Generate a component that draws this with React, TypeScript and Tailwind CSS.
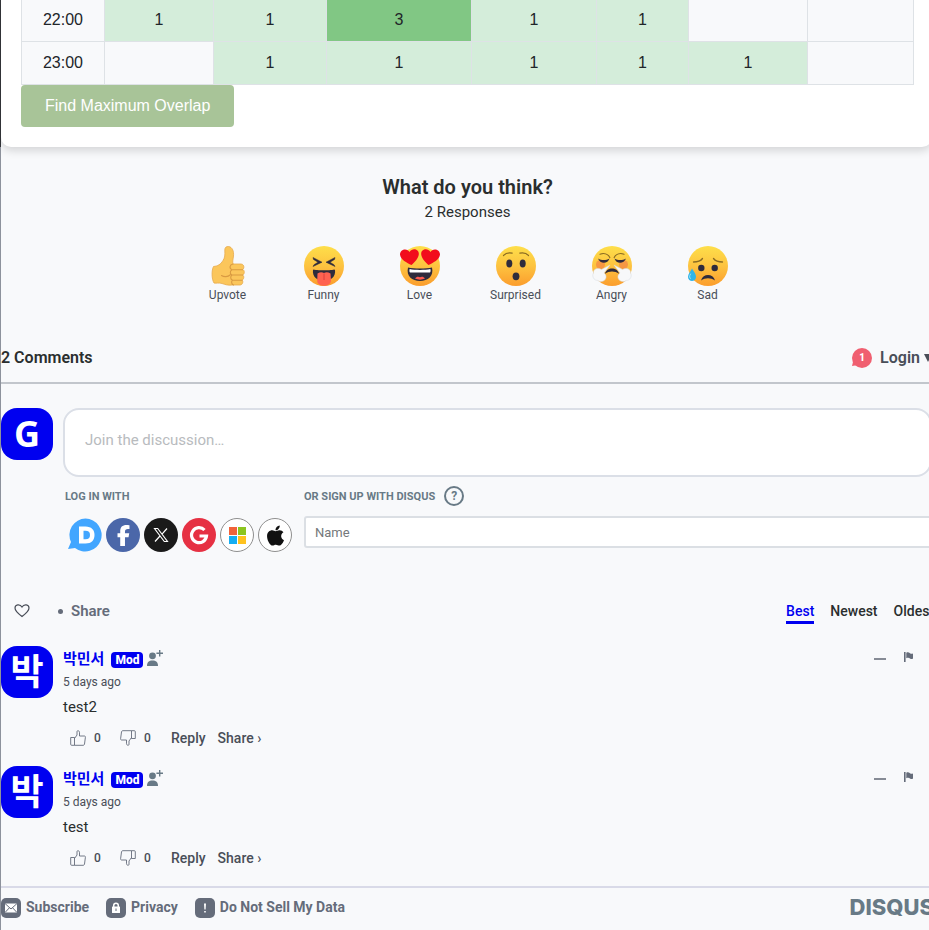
import type { ReactNode } from "react";
import { FaApple, FaFacebookF } from "react-icons/fa6";

const columns = [83, 109, 113, 145, 125, 92, 119, 106];

const rows: { time: string; counts: (number | null)[] }[] = [
  { time: "22:00", counts: [1, 1, 3, 1, 1, null, null] },
  { time: "23:00", counts: [null, 1, 1, 1, 1, 1, null] },
];

function cellTone(count: number | null) {
  if (count === null) return "bg-[#f8f9fb]";
  return count >= 3 ? "bg-[#81c784]" : "bg-[#d4edda]";
}

function ScheduleCard() {
  return (
    <section className="border-l border-[#34363a]">
      <div className="mr-0.5 rounded-b-[10px] bg-white pr-[18px] pb-5 pl-5 shadow-[0_4px_8px_rgba(0,0,0,0.14)]">
        <table className="w-full table-fixed border-separate border-spacing-0 border-l border-[#dee2e6] text-center text-base leading-6 font-normal text-[#212529]">
          <colgroup>
            {columns.map((width, i) => (
              <col key={i} style={{ width }} />
            ))}
          </colgroup>
          <tbody>
            {rows.map((row, r) => (
              <tr key={row.time} className={r === 0 ? "h-[42px] align-top leading-[39px]" : "h-[43px]"}>
                <th scope="row" className="border-r border-b border-[#dee2e6] bg-[#f8f9fb] p-0 font-normal">
                  {row.time}
                </th>
                {row.counts.map((count, i) => (
                  <td key={i} className={`border-r border-b border-[#dee2e6] p-0 ${cellTone(count)}`}>
                    {count}
                  </td>
                ))}
              </tr>
            ))}
          </tbody>
        </table>
        <button type="button" className="block h-[42px] rounded bg-[#a8c498] px-6 text-base text-white">
          Find Maximum Overlap
        </button>
      </div>
    </section>
  );
}

function Face({ children }: { children: ReactNode }) {
  return (
    <svg viewBox="0 0 40 40" className="size-10" aria-hidden="true">
      <circle cx="20" cy="20" r="20" fill="url(#skin)" />
      {children}
    </svg>
  );
}

function ThumbEmoji() {
  return (
    <svg viewBox="0 0 40 40" className="size-10" aria-hidden="true">
      <path
        d="M5.500 20.500 C10 20 12.500 18.500 15 14.500 C17 11.500 17 9 16.800 4 C16.800 1.300 18.500 0.300 20.500 0.500 C24.500 1 26 5.500 25.500 10 C25.200 13 24.300 15.500 25 18 H33 C36.500 18 36.500 23 34.500 23.500 C37 24 36.700 28.500 34.500 29 C36.500 29.700 36 33.600 34 34 C35.700 35 34.700 39 32 39 H24 C20 39.600 17 38.500 14 37.500 C11 36.600 8 37.500 6 37 C3.500 33 3.500 24 5.500 20.500Z"
        fill="#fbc65b"
        stroke="#e6a94c"
        strokeWidth="0.800"
      />
      <path
        d="M25 18 C21.500 18.500 21 22.500 24 23.700 H34.500 M24 23.700 C21.500 25 22 28.500 24 29 H34.500 M24 29 C22 30.500 22.500 33.500 24.500 34.200 H34 M24.500 34.200 C23 35.500 23.500 38.500 25.500 39 M13.500 29.500 C16 31.200 20 31 22 29"
        fill="none"
        stroke="#d99a42"
        strokeWidth="1.100"
        strokeLinecap="round"
      />
    </svg>
  );
}

function FunnyEmoji() {
  return (
    <Face>
      <path d="M9 11.500 L18 16.200 L9 20.500 L10 18.700 L14 16.200 L9.500 13.500Z M31 11.500 L22 16.200 L31 20.500 L30 18.700 L26 16.200 L30.500 13.500Z" fill="#2f2b3c" stroke="#2f2b3c" strokeWidth="0.500" />
      <path d="M9 23.500 C12 24.500 28 24.500 31 23.500 C32 31 26.500 35 20 35 C13.500 35 8 31 9 23.500Z" fill="#2f2b3c" />
      <path d="M13.500 27.500 C16 26 18 26 20 27 C22 26 24 26 26.500 27.500 L27 34.500 C27 41.500 13 41.500 13.200 34.500Z" fill="#ff6250" />
      <path d="M20 27.500 V34" stroke="#da3b3b" strokeWidth="0.900" />
    </Face>
  );
}

function LoveEmoji() {
  return (
    <Face>
      <path d="M8 21.500 C14 22.800 26 22.800 32 21.500 C34 30 28 35 20 35 C12 35 6 30 8 21.500Z" fill="#2f2b3c" />
      <path d="M9.600 23 C15 24.200 25 24.200 30.400 23 C31 25.800 30.300 26.600 29.400 26.600 H10.600 C9.700 26.600 9 25.800 9.600 23Z" fill="#fff" />
      <path d="M15 32.500 C16.500 30.500 18.500 30.500 20 31.300 C21.500 30.500 23.500 30.500 25 32.500 C22 34 18 34 15 32.500Z" fill="#ff5a4f" />
      <path d="M11.500 19 C7 17 0.300 13.500 0 8.500 C0 2.800 7.500 1.700 9.500 6 C12.500 1.300 19.300 3.200 18.800 8.300 C18.500 12.500 14.500 16.500 11.500 19Z" fill="#f20d1c" />
      <path d="M28.500 19 C33 17 39.700 13.500 40 8.500 C40 2.800 32.500 1.700 30.500 6 C27.500 1.300 20.700 3.200 21.200 8.300 C21.500 12.500 25.500 16.500 28.500 19Z" fill="#f20d1c" />
    </Face>
  );
}

function SurprisedEmoji() {
  return (
    <Face>
      <ellipse cx="13.300" cy="17.500" rx="3" ry="4" fill="#2f2b3c" />
      <ellipse cx="26.700" cy="17.500" rx="3" ry="4" fill="#2f2b3c" />
      <ellipse cx="20" cy="30.300" rx="3.400" ry="3.900" fill="#2f2b3c" />
      <path d="M7.500 9.500 C9.500 7.300 13 6.500 16.200 7.200 M32.500 9.500 C30.500 7.300 27 6.500 23.800 7.200" fill="none" stroke="#8a6b22" strokeWidth="1.200" strokeLinecap="round" />
    </Face>
  );
}

function AngryEmoji() {
  return (
    <Face>
      <circle cx="8.500" cy="18.500" r="4.500" fill="#ef6a45" opacity="0.500" />
      <circle cx="31.500" cy="18.500" r="4.500" fill="#ef6a45" opacity="0.500" />
      <path d="M8 8.200 C12 6.800 16 8 17.800 11.500 M32 8.200 C28 6.800 24 8 22.200 11.500" fill="none" stroke="#8a6b22" strokeWidth="1.200" strokeLinecap="round" />
      <path d="M6 12.500 C9.500 14.500 14 14.500 17.500 12.500 C16 18.200 8 18.200 6 12.500Z M34 12.500 C30.500 14.500 26 14.500 22.500 12.500 C24 18.200 32 18.200 34 12.500Z" fill="#2f2b3c" />
      <path d="M13 27.800 C14.500 20.800 25.500 20.800 27 27.800 C23 24.800 17 24.800 13 27.800Z" fill="#2f2b3c" />
      <path d="M18 19 L9.500 23.500 C6 21 0.800 23 1.500 27 C-0.500 30 2 34.800 5.500 34.300 C8 36.800 13.500 35.500 14 31.500 C14.500 29 12.500 27.500 12 27Z" fill="#f7f8fa" stroke="#d5dbe3" strokeWidth="0.500" />
      <path d="M22 19 L30.500 23.500 C34 21 39.200 23 38.500 27 C40.500 30 38 34.800 34.500 34.300 C32 36.800 26.500 35.500 26 31.500 C25.500 29 27.500 27.500 28 27Z" fill="#f7f8fa" stroke="#d5dbe3" strokeWidth="0.500" />
    </Face>
  );
}

function SadEmoji() {
  return (
    <Face>
      <circle cx="13.300" cy="22" r="3.200" fill="#2f2b3c" />
      <circle cx="26.700" cy="22" r="3.200" fill="#2f2b3c" />
      <path d="M5.500 16 C9.500 16 13 14.500 14.500 12.500 M34.500 16 C30.500 16 27 14.500 25.500 12.500" fill="none" stroke="#8a6b22" strokeWidth="1.300" strokeLinecap="round" />
      <path d="M13 34.500 C15 27.300 25 27.300 27 34.500 C22.500 31.500 17.500 31.500 13 34.500Z" fill="#2f2b3c" />
      <path d="M4 22.500 C6 26 8.200 28 8 31 C7.800 36.300 0.200 36.300 0 31 C-0.100 28 2.500 26 4 22.500Z" fill="#31b5e8" />
      <path d="M2.500 28 C1 30.500 1.500 32 2.500 32.500" fill="none" stroke="#9be0f8" strokeWidth="1" strokeLinecap="round" />
    </Face>
  );
}

const reactions = [
  { label: "Upvote", Icon: ThumbEmoji },
  { label: "Funny", Icon: FunnyEmoji },
  { label: "Love", Icon: LoveEmoji },
  { label: "Surprised", Icon: SurprisedEmoji },
  { label: "Angry", Icon: AngryEmoji },
  { label: "Sad", Icon: SadEmoji },
];

function Reactions() {
  return (
    <section className="pt-7 text-center text-[#2a2e2e]">
      <svg className="absolute size-0" aria-hidden="true">
        <defs>
          <linearGradient id="skin" x1="0" y1="0" x2="0" y2="1">
            <stop offset="0" stopColor="#fedf4a" />
            <stop offset="0.500" stopColor="#fdc340" />
            <stop offset="1" stopColor="#fb9d2d" />
          </linearGradient>
        </defs>
      </svg>
      <h2 className="text-xl leading-6 font-semibold">What do you think?</h2>
      <p className="text-[15px] leading-[26px]">2 Responses</p>
      <div className="mt-[21px] flex justify-center">
        {reactions.map(({ label, Icon }) => (
          <button key={label} type="button" className="flex w-24 flex-col items-center text-xs leading-[18px] text-[#494e58]">
            <Icon />
            {label}
          </button>
        ))}
      </div>
    </section>
  );
}

function Avatar({ letter }: { letter: string }) {
  return (
    <div className="flex size-[52px] shrink-0 items-center justify-center rounded-2xl bg-[#0000f0] font-['Noto_Sans','Noto_Sans_CJK_KR',sans-serif] text-[36px] leading-[52px] font-bold text-white">
      {letter}
    </div>
  );
}

function SocialButton({ label, tone, children }: { label: string; tone: string; children: ReactNode }) {
  return (
    <button type="button" aria-label={label} className={`flex size-[34px] items-center justify-center rounded-full ${tone}`}>
      {children}
    </button>
  );
}

function SocialLogins() {
  return (
    <div className="mt-3 flex gap-1 pl-[3px]">
      <button type="button" aria-label="Disqus" className="size-[34px]">
        <svg viewBox="0 0 34 34" className="size-[34px]">
          <path d="M17.500 0.500 A16.500 16.500 0 1 1 7 30 L0 31 L3 24 A16.500 16.500 0 0 1 17.500 0.500Z" fill="#42a6ff" />
          <path fillRule="evenodd" d="M11 8.500 H17.500 C23.500 8.500 26.500 12 26.500 17 C26.500 22 23.500 25.500 17.500 25.500 H11Z M15.500 12.700 V21.300 H17.500 C20.500 21.300 22 20 22 17 C22 14 20.500 12.700 17.500 12.700Z" fill="#fff" />
        </svg>
      </button>
      <SocialButton label="Facebook" tone="bg-[#4b67a9] text-white">
        <FaFacebookF className="size-[21px]" />
      </SocialButton>
      <SocialButton label="X" tone="bg-[#1a1a1a] text-white">
        <svg viewBox="0 0 16 16" className="size-4" fill="none" stroke="#fff">
          <path d="M1.500 1.500 H4.700 L14.500 14.500 H11.300Z" strokeWidth="1.100" />
          <path d="M14 1.500 L9 7.200 M7 9 L2 14.500" strokeWidth="1.200" />
        </svg>
      </SocialButton>
      <SocialButton label="Google" tone="bg-[#e63143]">
        <svg viewBox="0 0 20 20" className="size-5">
          <path d="M15.500 5 A7.500 7.500 0 1 0 17.500 11 H10.500" fill="none" stroke="#fff" strokeWidth="3.200" />
        </svg>
      </SocialButton>
      <SocialButton label="Microsoft" tone="border border-[#8f8f8f] bg-white">
        <span className="grid grid-cols-2 gap-px">
          <i className="size-2 bg-[#f1633a]" />
          <i className="size-2 bg-[#8cc51f]" />
          <i className="size-2 bg-[#16aef2]" />
          <i className="size-2 bg-[#ffc21f]" />
        </span>
      </SocialButton>
      <SocialButton label="Apple" tone="border border-[#8f8f8f] bg-white text-[#111]">
        <FaApple className="size-[23px]" />
      </SocialButton>
    </div>
  );
}

function Composer() {
  return (
    <form>
      <div className="mt-6 mr-0.5 flex gap-2.5">
        <Avatar letter="G" />
        <textarea
          aria-label="Join the discussion"
          placeholder="Join the discussion…"
          className="block h-[69px] min-w-0 flex-1 resize-none rounded-2xl border-2 border-[#dbdfe7] bg-white px-5 py-5 text-[15px] leading-5 placeholder:text-[#b8bbbe]"
        />
      </div>
      <div className="mt-[9px] flex pl-16">
        <div className="w-[239px] shrink-0">
          <p className="pt-0.5 text-[11px] leading-[18px] font-bold text-[#687a86]">LOG IN WITH</p>
          <SocialLogins />
        </div>
        <div className="min-w-0 flex-1">
          <div className="flex h-5 items-center gap-[9px] text-[#687a86]">
            <label htmlFor="guest-name" className="pt-0.5 text-[11px] leading-[18px] font-bold">
              OR SIGN UP WITH DISQUS
            </label>
            <button type="button" aria-label="Help" className="flex size-5 items-center justify-center rounded-full border-2 border-[#687a86] text-xs leading-4 font-bold">
              ?
            </button>
          </div>
          <input
            id="guest-name"
            type="text"
            placeholder="Name"
            className="mt-2.5 block h-8 w-full rounded-[3px] border-2 border-[#dbdfe4] bg-white px-[9px] text-[13px] placeholder:text-[#75787b]"
          />
        </div>
      </div>
    </form>
  );
}

function ThumbOutline({ down }: { down?: boolean }) {
  return (
    <svg viewBox="0 0 16 16" className={`size-4 ${down ? "rotate-180" : ""}`} fill="none" stroke="#656c7a" strokeWidth="0.900" strokeLinejoin="round" aria-hidden="true">
      <path d="M0.700 7.500 H4.500 V15.300 H1.700 C1 15.300 0.700 15 0.700 14.300Z" />
      <path d="M4.500 8.500 L7 5 V1.500 C7 0.300 9.500 0.500 9.500 2.300 V6 H14.300 C15.200 6 15.500 6.600 15.400 7.300 L14.500 14 C14.300 15 13.900 15.300 13 15.300 H4.500" />
    </svg>
  );
}

function Comment({ text }: { text: string }) {
  return (
    <article className="mb-4 flex h-[104px] gap-2.5">
      <Avatar letter="박" />
      <div className="flex-1 pt-1">
        <div className="flex h-[19px] items-center leading-[19px]">
          <a href="#author" className="text-[15px] font-bold text-[#0000f0]">
            박민서
          </a>
          <span className="ml-[7px] rounded bg-[#0000f0] px-1 text-xs leading-4 font-extrabold text-white">Mod</span>
          <button type="button" aria-label="Follow" className="ml-1">
            <svg viewBox="0 0 16 16" className="mb-[3px] block size-4" fill="#687a86">
              <circle cx="5.500" cy="5.800" r="3.400" />
              <path d="M0 16 C0 12 2 10.500 5.500 10.500 C9 10.500 11 12 11 16Z" />
              <path d="M12 0 h1.400 v2.600 h2.600 v1.400 h-2.600 v2.600 h-1.400 v-2.600 h-2.600 v-1.400 h2.600Z" />
            </svg>
          </button>
        </div>
        <time className="block text-xs leading-[26px] text-[#494e58]">5 days ago</time>
        <p className="text-[15px] leading-6 text-[#2a2e2e]">{text}</p>
        <div className="mt-[7px] flex items-center pl-[7px] text-sm leading-6 font-medium text-[#494e58]">
          <button type="button" aria-label="Upvote comment" className="flex w-[50px] items-center gap-2 text-xs leading-6">
            <ThumbOutline />0
          </button>
          <button type="button" aria-label="Downvote comment" className="mr-px flex w-[50px] items-center gap-2 text-xs leading-6">
            <ThumbOutline down />0
          </button>
          <button type="button">Reply</button>
          <button type="button" className="ml-3">
            Share ›
          </button>
        </div>
      </div>
      <div className="flex items-start gap-[18px] pt-[5px] pr-5">
        <button type="button" aria-label="Collapse" className="flex h-4 w-3 items-center">
          <span className="h-0.5 w-full bg-[#868b95]" />
        </button>
        <button type="button" aria-label="Flag" className="pt-px">
          <svg viewBox="0 0 10 10" className="block size-2.5" fill="#656c7a">
            <path d="M0 0 H1.600 V10 H0Z M2.300 0.700 C4 0 5 0.500 6 1.300 C7 2 8 2 9 1.500 V6.500 C8 7.200 7 7.200 6 6.500 C5 5.700 4 5.500 2.300 6.200Z" />
          </svg>
        </button>
      </div>
    </article>
  );
}

function FooterLink({ label, children }: { label: string; children: ReactNode }) {
  return (
    <a href="#footer" className="flex items-start gap-[5px] leading-[18px]">
      <svg viewBox="0 0 20 20" className="size-5" aria-hidden="true">
        <rect width="20" height="20" rx="5" fill="#656c7a" />
        {children}
      </svg>
      {label}
    </a>
  );
}

function Footer() {
  return (
    <footer className="flex h-[44px] items-start border-t-2 border-[#d9dae8] pt-2.5 text-sm font-bold text-[#656c7a]">
      <nav className="flex flex-1 gap-[17px]">
        <FooterLink label="Subscribe">
          <path d="M4 5.500 H16 V14.500 H4Z" fill="#fff" />
          <path d="M4 5.500 L10 11 L16 5.500 M4 14.500 L8.500 9.700 M16 14.500 L11.500 9.700" fill="none" stroke="#656c7a" />
        </FooterLink>
        <FooterLink label="Privacy">
          <rect x="6" y="8.500" width="8" height="6.500" rx="0.500" fill="#fff" />
          <path d="M7.700 9 V7.500 C7.700 4.500 12.300 4.500 12.300 7.500 V9" fill="none" stroke="#fff" strokeWidth="1.500" />
          <rect x="9.500" y="10.500" width="1" height="2.500" fill="#656c7a" />
        </FooterLink>
        <FooterLink label="Do Not Sell My Data">
          <path d="M9 5.500 H11 L10.600 11.500 H9.400Z M9.200 13 H10.800 V14.500 H9.200Z" fill="#fff" />
        </FooterLink>
      </nav>
      <a href="#disqus" className="font-['Inter',sans-serif] text-[22px] leading-[18px] font-extrabold text-[#687a86]">
        DISQUS
      </a>
    </footer>
  );
}

export default function App() {
  return (
    <div className="w-full overflow-hidden bg-[#f8f9fb] font-['Liberation_Sans',Arial,sans-serif]">
      <main className="-mr-[5px]">
        <ScheduleCard />
        <div className="border-l border-[#8d929c] font-['Roboto','Noto_Sans_CJK_KR',sans-serif]">
          <Reactions />
          <header className="mt-[42px] flex items-center justify-between border-b-2 border-[#c2c6cc] pr-0.5 pb-3 leading-6">
            <h2 className="text-base font-semibold text-[#2a2e2e]">2 Comments</h2>
            <button type="button" className="flex items-center gap-2 font-semibold text-[#494e58]">
              <span className="relative flex size-5 items-center justify-center rounded-full bg-[#f05f70] text-[10px] font-extrabold text-white">
                <svg viewBox="0 0 6 6" className="absolute bottom-0.5 left-0 size-1.5" fill="#f05f70" aria-hidden="true">
                  <path d="M1.500 0 L0 6 L6 5Z" />
                </svg>
                1
              </span>
              <span className="flex items-center gap-1">
                Login
                <svg viewBox="0 0 8 8" className="size-2" fill="#494e58" aria-hidden="true">
                  <path d="M0 0 H8 L4 8Z" />
                </svg>
              </span>
            </button>
          </header>
          <Composer />
          <div className="mt-[47px] mb-[22px] flex h-[25px] items-start justify-between leading-[22px]">
            <div className="flex items-center pt-px pl-[13px]">
              <button type="button" aria-label="Favorite">
                <svg viewBox="0 0 16 16" className="block size-4" fill="none" stroke="#494e58" strokeWidth="1.200">
                  <path d="M8 13.500 C4 10.500 1 8 1 5 C1 1.300 6 0.600 8 4 C10 0.600 15 1.300 15 5 C15 8 12 10.500 8 13.500Z" />
                </svg>
              </button>
              <span className="ml-7 size-[5px] rounded-full bg-[#656c7a]" />
              <button type="button" className="ml-2 text-[15px] font-semibold text-[#656c7a]">
                Share
              </button>
            </div>
            <div className="flex gap-4 text-sm leading-[22px] font-medium text-[#2a2e2e]">
              <button type="button" className="border-b-3 border-[#0000f0] pt-0.5 leading-5 text-[#0000f0]">
                Best
              </button>
              <button type="button" className="border-b-3 border-transparent pt-0.5 leading-5">
                Newest
              </button>
              <button type="button" className="border-b-3 border-transparent pt-0.5 leading-5">
                Oldest
              </button>
            </div>
          </div>
          <Comment text="test2" />
          <Comment text="test" />
          <Footer />
        </div>
      </main>
    </div>
  );
}
